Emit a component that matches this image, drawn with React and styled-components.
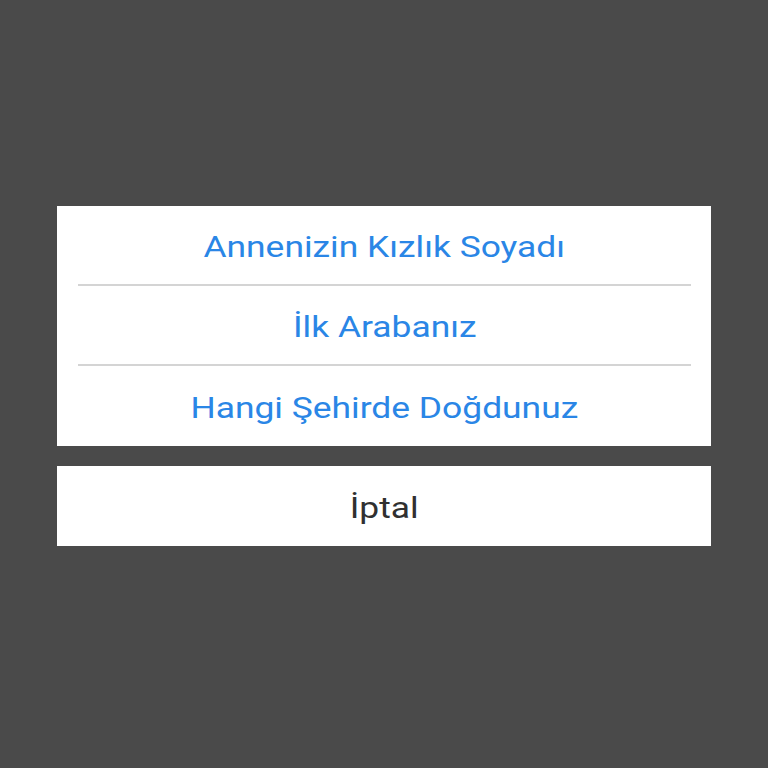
import React from 'react'
import styled, { createGlobalStyle } from 'styled-components'

const GlobalStyle = createGlobalStyle`
    html, body {
        margin: 0;
        padding: 0;
        background-color: #4a4a4a;
    }
    body {
        font-family: Roboto, "Noto Sans", sans-serif;
    }
`

const options = ["Annenizin Kızlık Soyadı", "İlk Arabanız", "Hangi Şehirde Doğdunuz"]

export default function App() {
    return (
        <>
            <GlobalStyle />
            <Overlay>
                <Sheet>
                    <Group>
                        {options.map((item, index) => (
                            <Row key={index} divider={index < options.length - 1}>
                                <Label>{item}</Label>
                            </Row>
                        ))}
                    </Group>
                    <Group>
                        <Row>
                            <Label cancel>İptal</Label>
                        </Row>
                    </Group>
                </Sheet>
            </Overlay>
        </>
    )
}

const Overlay = styled.div`
    width: 768px;
    height: 768px;
    display: flex;
    align-items: flex-start;
    justify-content: center;
    background-color: #4a4a4a;
`
const Sheet = styled.div`
    margin-top: 206px;
    width: 654px;
    display: flex;
    flex-direction: column;
    gap: 20px;
`
const Group = styled.div`
    background-color: #fff;
    display: flex;
    flex-direction: column;
    padding: 0 20px 0 21px;
`
const Row = styled.div`
    height: ${({divider}) => divider ? "78px" : "80px"};
    display: flex;
    align-items: center;
    justify-content: center;
    border-bottom: ${({divider}) => divider ? "2px solid #d4d4d4" : "none"};
`
const Label = styled.span`
    display: inline-block;
    font-size: 30px;
    color: ${({cancel}) => cancel ? "#303030" : "#2a86e6"};
    transform: scaleX(1.18);
    margin-top: 2px;
`
